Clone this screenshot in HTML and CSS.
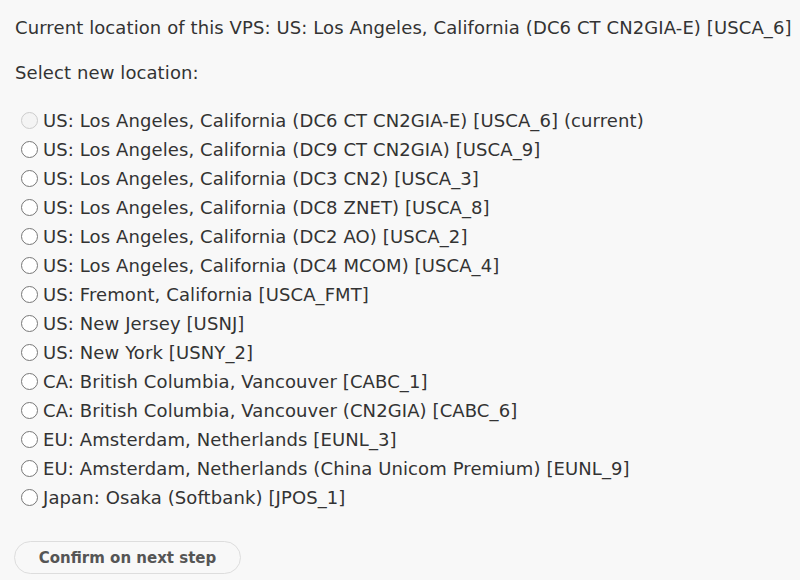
FILE: index.html
```html
<!DOCTYPE html>
<html lang="en">
<head>
    <meta charset="UTF-8">
    <title>Change VPS location</title>
    <link rel="stylesheet" href="styles.css">
</head>
<body>
    <p class="current">Current location of this VPS: US: Los Angeles, California (DC6 CT CN2GIA-E) [USCA_6]</p>
    <p class="prompt">Select new location:</p>
    <form class="locations">
        <label class="loc disabled"><input type="radio" name="loc" disabled>US: Los Angeles, California (DC6 CT CN2GIA-E) [USCA_6] (current)</label>
        <label class="loc"><input type="radio" name="loc">US: Los Angeles, California (DC9 CT CN2GIA) [USCA_9]</label>
        <label class="loc"><input type="radio" name="loc">US: Los Angeles, California (DC3 CN2) [USCA_3]</label>
        <label class="loc"><input type="radio" name="loc">US: Los Angeles, California (DC8 ZNET) [USCA_8]</label>
        <label class="loc"><input type="radio" name="loc">US: Los Angeles, California (DC2 AO) [USCA_2]</label>
        <label class="loc"><input type="radio" name="loc">US: Los Angeles, California (DC4 MCOM) [USCA_4]</label>
        <label class="loc"><input type="radio" name="loc">US: Fremont, California [USCA_FMT]</label>
        <label class="loc"><input type="radio" name="loc">US: New Jersey [USNJ]</label>
        <label class="loc"><input type="radio" name="loc">US: New York [USNY_2]</label>
        <label class="loc"><input type="radio" name="loc">CA: British Columbia, Vancouver [CABC_1]</label>
        <label class="loc"><input type="radio" name="loc">CA: British Columbia, Vancouver (CN2GIA) [CABC_6]</label>
        <label class="loc"><input type="radio" name="loc">EU: Amsterdam, Netherlands [EUNL_3]</label>
        <label class="loc"><input type="radio" name="loc">EU: Amsterdam, Netherlands (China Unicom Premium) [EUNL_9]</label>
        <label class="loc"><input type="radio" name="loc">Japan: Osaka (Softbank) [JPOS_1]</label>
        <button type="button" class="confirm">Confirm on next step</button>
    </form>
</body>
</html>
```

FILE: styles.css
```css
body {
    margin: 0;
    padding: 16px 0 16px 15px;
    background: #f8f8f8;
    color: #333;
    font-family: "DejaVu Sans", Verdana, sans-serif;
    font-size: 18px;
    letter-spacing: 0.1px;
}
p {
    margin: 0 0 21px;
    line-height: 24px;
    white-space: nowrap;
}
.prompt {
    margin-bottom: 21px;
}
.locations {
    display: flex;
    flex-direction: column;
    align-items: flex-start;
}
.loc {
    display: flex;
    align-items: center;
    height: 29px;
    padding-left: 6px;
}
.loc input {
    appearance: none;
    margin: 0 5px 0 0;
    width: 17px;
    height: 17px;
    border: 1.5px solid #777;
    border-radius: 50%;
    background: #fff;
}
.loc input:disabled {
    border-color: #ccc;
    background: #f4f4f4;
}
.confirm {
    margin: 29px 0 0 -1px;
    width: 227px;
    height: 33px;
    border: 1px solid #ddd;
    border-radius: 17px;
    background: #f8f8f8;
    color: #555;
    font-family: inherit;
    font-size: 15px;
    font-weight: bold;
    letter-spacing: 0;
}
```
